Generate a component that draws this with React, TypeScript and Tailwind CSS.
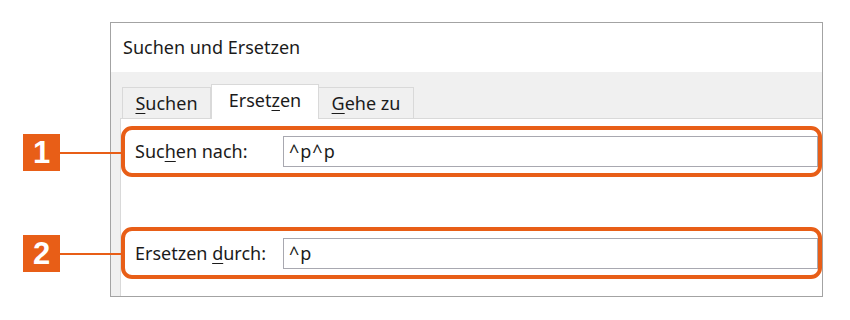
import type { ReactNode } from 'react'

const orange = 'bg-[#e85e17]'

function Mnemonic({ children }: { children: ReactNode }) {
  return <span className="underline underline-offset-[3px] decoration-1">{children}</span>
}

function Callout({ n, top }: { n: string; top: string }) {
  return (
    <div className={`absolute left-[23px] ${top} flex items-center`}>
      <div className={`w-[37px] h-[37px] ${orange} flex items-center justify-center text-white text-[31px] font-bold font-['Liberation_Sans',sans-serif] leading-none`}>
        {n}
      </div>
      <div className={`w-[62px] h-[2px] ${orange}`} />
    </div>
  )
}

function Field({ label, value, h }: { label: ReactNode; value: string; h: string }) {
  return (
    <div className={`${h} border-4 border-[#e85e17] rounded-[11px] flex items-center pl-[10px]`}>
      <div className="w-[148px] text-[18px]">{label}</div>
      <div className="flex-1 h-[31px] border border-[#a8a8b0] flex items-center pl-[5px] text-[18px] tracking-[1px]">
        {value}
      </div>
    </div>
  )
}

export default function App() {
  return (
    <div className="relative w-[850px] h-[320px] bg-white font-['Noto_Sans',sans-serif] text-[#1b1b1b] pt-[22px] pl-[110px]">
      <div className="w-[713px] h-[275px] border border-[#a3a3a3] flex flex-col">
        <div className="h-[49px] flex items-center pl-[12px] text-[18px] bg-white">Suchen und Ersetzen</div>
        <div className="flex-1 bg-[#f0f0f0] flex flex-col pl-[9px]">
          <div className="h-[46px] flex items-end pl-[2px] text-[18px]">
            <div className="w-[89px] h-[31px] border border-b-0 border-[#d9d9d9] flex items-center justify-center pt-[1px]">
              <span><Mnemonic>S</Mnemonic>uchen</span>
            </div>
            <div className="w-[108px] h-[35px] bg-white border border-b-0 border-[#d9d9d9] -mb-px relative z-10 flex items-center justify-center pb-[3px]">
              <span>Erset<Mnemonic>z</Mnemonic>en</span>
            </div>
            <div className="w-[95px] h-[31px] border border-b-0 border-l-0 border-[#d9d9d9] flex items-center justify-center pt-[1px]">
              <span><Mnemonic>G</Mnemonic>ehe zu</span>
            </div>
          </div>
          <div className="flex-1 bg-white border-t border-l border-[#d9d9d9] pt-[7px]">
            <Field h="h-[51px]" label={<span>Suc<Mnemonic>h</Mnemonic>en nach:</span>} value="^p^p" />
            <div className="mt-[50px]">
              <Field h="h-[52px]" label={<span>Ersetzen <Mnemonic>d</Mnemonic>urch:</span>} value="^p" />
            </div>
          </div>
        </div>
      </div>
      <Callout n="1" top="top-[134px]" />
      <Callout n="2" top="top-[235px]" />
    </div>
  )
}
